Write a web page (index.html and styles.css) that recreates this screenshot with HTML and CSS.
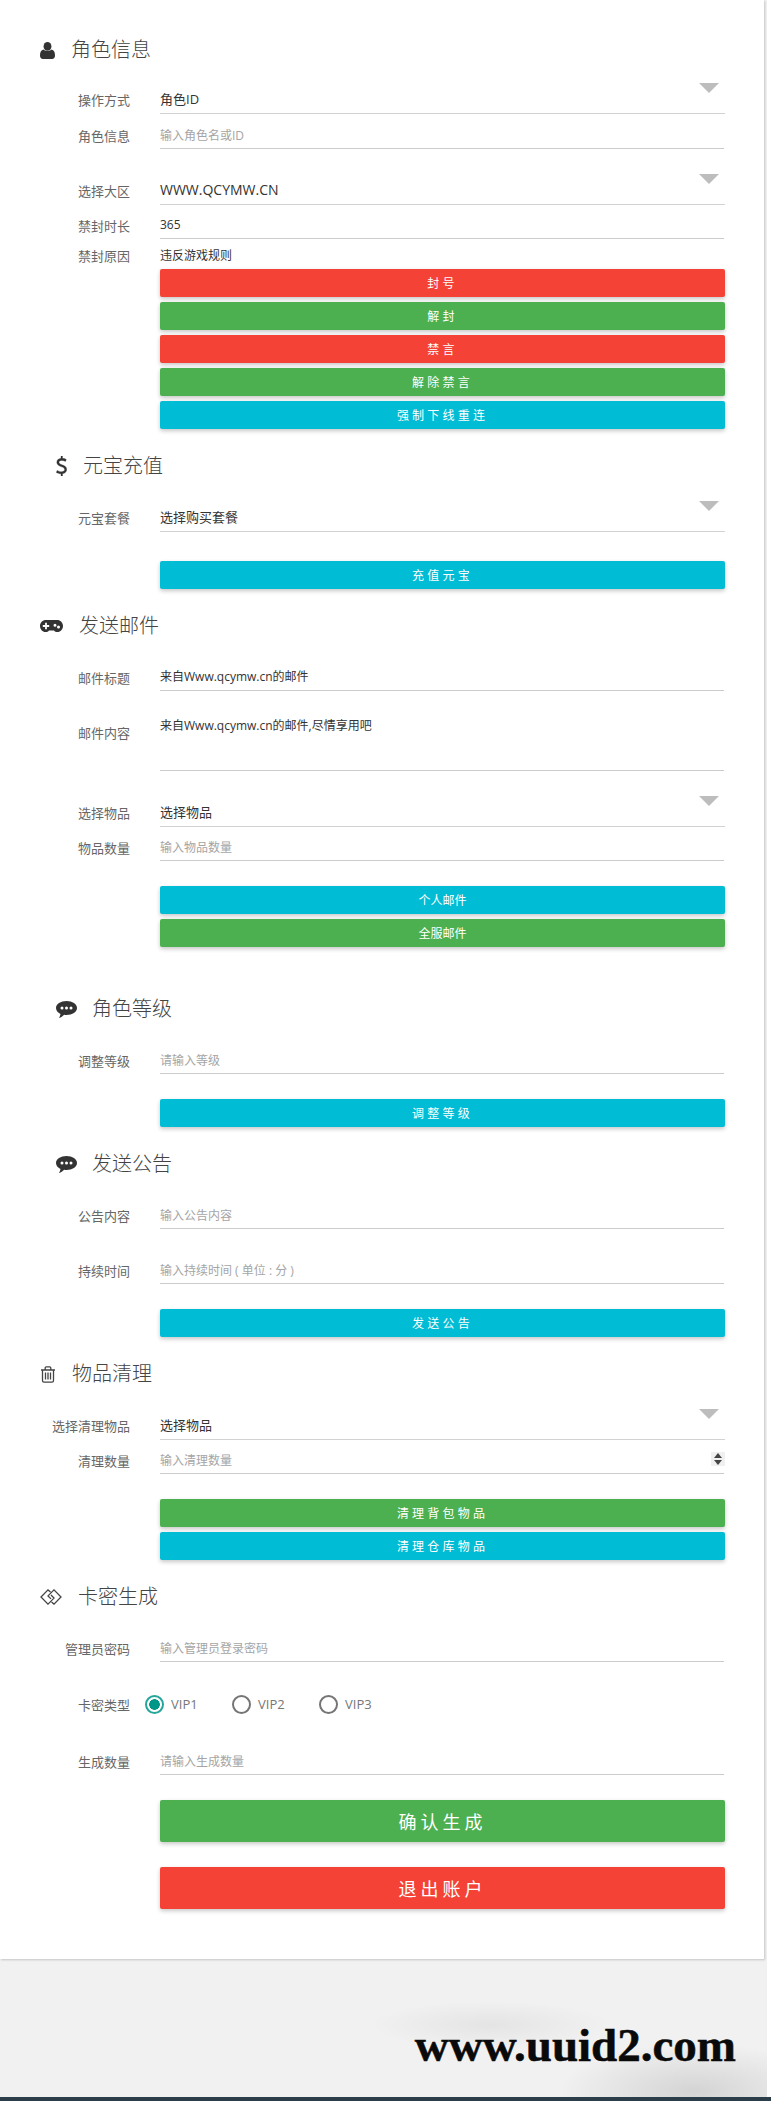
FILE: index.html
```html
<!DOCTYPE html>
<html lang="zh-CN">
<head>
<meta charset="utf-8">
<title>GM</title>
<link rel="stylesheet" href="styles.css">
</head>
<body>
<div class="page">
<main class="card">

<h2 class="title indent-a gap-first">
  <svg class="ico ico-user" viewBox="0 0 16 18"><ellipse cx="8" cy="4.6" rx="4.2" ry="4.6"/><path d="M0 14.6c0-3.8 1-6 3.8-6.6 1 1 2.500 1.600 4.200 1.600s3.200-.6 4.200-1.600c2.800.6 3.800 2.800 3.800 6.600 0 2.100-1.300 3.400-3 3.400H3c-1.700 0-3-1.300-3-3.400z"/></svg>
  <span>角色信息</span>
</h2>
<div class="row sel gap-19"><label class="lab">操作方式</label><div class="ctl"><span class="val">角色ID</span><i class="arrow"></i></div></div>
<div class="row inp gap-8"><label class="lab">角色信息</label><div class="ctl"><span class="ph">输入角色名或ID</span></div></div>
<div class="row sel gap-26"><label class="lab">选择大区</label><div class="ctl"><span class="val wide">WWW.QCYMW.CN</span><i class="arrow"></i></div></div>
<div class="row inp gap-7"><label class="lab">禁封时长</label><div class="ctl"><span class="val small">365</span></div></div>
<div class="row inp bare gap-3"><label class="lab">禁封原因</label><div class="ctl"><span class="val small">违反游戏规则</span></div></div>
<button class="btn red spaced">封号</button>
<button class="btn green spaced gap-5">解封</button>
<button class="btn red spaced gap-5">禁言</button>
<button class="btn green spaced gap-5">解除禁言</button>
<button class="btn cyan spaced gap-5">强制下线重连</button>

<h2 class="title indent-b gap-22">
  <svg class="ico ico-dollar" viewBox="0 0 11 20"><path d="M5 0h1.500v2.300c1.500.1 2.700.5 3.800 1.100l-.8 2c-1.200-.6-2.500-1-3.800-1-1.700 0-2.700.7-2.700 1.900 0 1.100.8 1.700 3 2.500 3 1.100 4.700 2.300 4.700 4.700 0 2.200-1.600 3.800-4.200 4.200V20H5v-2.200c-1.800-.1-3.500-.6-4.700-1.300l.8-2.100c1.300.7 2.900 1.300 4.500 1.300 1.900 0 3-.9 3-2.200 0-1.200-.9-1.900-3-2.700C2.600 9.700.8 8.600.8 6.200c0-2.100 1.600-3.600 4.200-3.900z"/></svg>
  <span>元宝充值</span>
</h2>
<div class="row sel gap-21"><label class="lab">元宝套餐</label><div class="ctl"><span class="val">选择购买套餐</span><i class="arrow"></i></div></div>
<button class="btn cyan spaced gap-29">充值元宝</button>

<h2 class="title indent-a gap-22">
  <svg class="ico ico-pad" viewBox="0 0 23 12"><path fill-rule="evenodd" d="M6 0h11c3.500 0 6 2.700 6 6s-2.500 6-5.500 6c-1.700 0-2.700-.6-3.500-1.600H9C8.200 11.400 7.200 12 5.500 12 2.500 12 0 9.300 0 6s2.500-6 6-6zM5.100 2.800v2.300H2.800v1.800h2.300v2.300h1.800V6.900h2.300V5.100H6.900V2.800zm9.900 .9a1.500 1.500 0 1 0 0 3 1.500 1.500 0 0 0 0-3zm3.500 1.700a1.500 1.500 0 1 0 0 3 1.500 1.500 0 0 0 0-3z"/></svg>
  <span>发送邮件</span>
</h2>
<div class="row inp gap-23"><label class="lab">邮件标题</label><div class="ctl"><span class="val small">来自Www.qcymw.cn的邮件</span></div></div>
<div class="row area gap-24"><label class="lab">邮件内容</label><div class="ctl"><span class="val small">来自Www.qcymw.cn的邮件,尽情享用吧</span></div></div>
<div class="row sel gap-26"><label class="lab">选择物品</label><div class="ctl"><span class="val">选择物品</span><i class="arrow"></i></div></div>
<div class="row inp gap-7"><label class="lab">物品数量</label><div class="ctl"><span class="ph">输入物品数量</span></div></div>
<button class="btn cyan gap-25">个人邮件</button>
<button class="btn green gap-5">全服邮件</button>

<h2 class="title indent-b gap-47 tight">
  <svg class="ico ico-chat" viewBox="0 0 21 17"><path fill-rule="evenodd" d="M10.500 0C16.300 0 21 3 21 7s-4.700 7-10.500 7c-.8 0-1.600-.1-2.400-.2C6.700 15.400 5 16.500 3 17c.8-1.200 1.300-2.500 1.500-4C1.800 11.700 0 9.500 0 7c0-4 4.700-7 10.500-7zM6 5.500a1.500 1.500 0 1 0 0 3 1.500 1.500 0 0 0 0-3zm4.500 0a1.500 1.500 0 1 0 0 3 1.500 1.500 0 0 0 0-3zm4.500 0a1.500 1.500 0 1 0 0 3 1.500 1.500 0 0 0 0-3z"/></svg>
  <span>角色等级</span>
</h2>
<div class="row inp gap-23"><label class="lab">调整等级</label><div class="ctl"><span class="ph">请输入等级</span></div></div>
<button class="btn cyan spaced gap-25">调整等级</button>

<h2 class="title indent-b gap-22 tight">
  <svg class="ico ico-chat" viewBox="0 0 21 17"><path fill-rule="evenodd" d="M10.500 0C16.300 0 21 3 21 7s-4.700 7-10.500 7c-.8 0-1.600-.1-2.400-.2C6.700 15.400 5 16.500 3 17c.8-1.200 1.300-2.500 1.500-4C1.800 11.700 0 9.500 0 7c0-4 4.700-7 10.500-7zM6 5.500a1.500 1.500 0 1 0 0 3 1.500 1.500 0 0 0 0-3zm4.500 0a1.500 1.500 0 1 0 0 3 1.500 1.500 0 0 0 0-3zm4.500 0a1.500 1.500 0 1 0 0 3 1.500 1.500 0 0 0 0-3z"/></svg>
  <span>发送公告</span>
</h2>
<div class="row inp gap-23"><label class="lab">公告内容</label><div class="ctl"><span class="ph">输入公告内容</span></div></div>
<div class="row inp gap-28"><label class="lab">持续时间</label><div class="ctl"><span class="ph">输入持续时间 ( 单位 : 分 )</span></div></div>
<button class="btn cyan spaced gap-25">发送公告</button>

<h2 class="title indent-a gap-22">
  <svg class="ico ico-trash" viewBox="0 0 16 17"><path class="line" d="M1 4h14M2.500 4v10.500c0 1 .6 1.700 1.500 1.700h8c.9 0 1.500-.7 1.500-1.700V4M5.200 4V2c0-.7.4-1.200 1.100-1.200h3.400c.7 0 1.100.5 1.100 1.200v2M5.500 6.500v7M8 6.500v7M10.500 6.500v7"/></svg>
  <span>物品清理</span>
</h2>
<div class="row sel gap-21"><label class="lab">选择清理物品</label><div class="ctl"><span class="val">选择物品</span><i class="arrow"></i></div></div>
<div class="row inp gap-7"><label class="lab">清理数量</label><div class="ctl"><span class="ph">输入清理数量</span><i class="spin"></i></div></div>
<button class="btn green spaced gap-25">清理背包物品</button>
<button class="btn cyan spaced gap-5">清理仓库物品</button>

<h2 class="title indent-a gap-22">
  <svg class="ico ico-key" viewBox="0 0 22 16"><path class="line" d="M10.500 3 8 .9 1 8l7 7.100 6-6L11 6M11.500 13 14 15.100 21 8 14 .9l-6 6 3 3"/></svg>
  <span>卡密生成</span>
</h2>
<div class="row inp gap-23"><label class="lab">管理员密码</label><div class="ctl"><span class="ph">输入管理员登录密码</span></div></div>
<div class="radios gap-30">
  <label class="lab">卡密类型</label>
  <span class="radio on"><i class="dot"></i>VIP1</span>
  <span class="radio"><i class="dot"></i>VIP2</span>
  <span class="radio"><i class="dot"></i>VIP3</span>
</div>
<div class="row inp gap-32"><label class="lab">生成数量</label><div class="ctl"><span class="ph">请输入生成数量</span></div></div>
<button class="btn green big gap-25">确认生成</button>
<button class="btn red big gap-25">退出账户</button>
</main>

<footer class="foot"><span class="mark">www.uuid2.com</span></footer>
</div>
<div class="edge"></div>
</body>
</html>
```

FILE: styles.css
```css
* { box-sizing: border-box; }
html, body { margin: 0; padding: 0; }
body {
  width: 771px;
  height: 2101px;
  overflow: hidden;
  background: #fff;
  font-family: "Open Sans", "Noto Sans CJK SC", sans-serif;
  color: #333;
}
.page { width: 767px; height: 2097px; background: #f1f1f1; display: flex; flex-direction: column; }
.card {
  width: 764px;
  height: 1959px;
  background: #fff;
  box-shadow: 1px 1px 2px rgba(0,0,0,.18);
  padding: 0 39px 0 0;
  display: flex;
  flex-direction: column;
}
.title {
  margin-bottom: 0;
  height: 30px;
  display: flex;
  align-items: center;
  gap: 16px;
  font-size: 20px;
  font-weight: 300;
  line-height: 30px;
  color: #444;
  flex: none;
}
.title.tight { gap: 15px; }
.indent-a { padding-left: 40px; }
.indent-b { padding-left: 56px; }
.ico { flex: none; fill: #333; display: block; }
.ico .line { fill: none; stroke: #444; stroke-width: 1.300; }
.ico-user { width: 15px; height: 17px; }
.ico-dollar { width: 11px; height: 20px; stroke: #333; stroke-width: .3; }
.ico-pad { width: 23px; height: 12px; }
.ico-chat { width: 21px; height: 17px; }
.ico-trash { width: 16px; height: 17px; }
.ico-key { width: 22px; height: 16px; }

.row { display: flex; flex: none; gap: 30px; }
.lab { width: 130px; flex: none; text-align: right; font-size: 13px; color: #666; }
.ctl { position: relative; flex: 1; border-bottom: 1px solid #d2d2d2; display: flex; align-items: center; font-size: 13px; }
.sel { height: 30px; align-items: center; }
.sel .ctl { height: 30px; }
.inp { height: 27px; align-items: center; }
.inp .ctl { height: 27px; margin-right: 1px; border-bottom-color: #ccc; }
.bare .ctl { border-bottom: 0; }
.area { height: 56px; }
.area .ctl { height: 56px; align-items: flex-start; padding-top: 1px; margin-right: 1px; border-bottom-color: #ccc; }
.area .lab { padding-top: 8px; }
.val { font-size: 13px; color: #333; line-height: 20px; }
.val.small { font-size: 12px; }
.val.wide { font-size: 14px; }
.ph { font-size: 12px; color: #a5a5a5; }
.arrow {
  position: absolute;
  right: 6px;
  top: -1px;
  width: 0;
  height: 0;
  border-left: 10px solid transparent;
  border-right: 10px solid transparent;
  border-top: 10px solid #bdbdbd;
}
.spin {
  position: absolute;
  right: -1px;
  top: 5px;
  width: 14px;
  height: 14px;
  background:
    linear-gradient(#f0f0f0, #f0f0f0);
}
.spin::before, .spin::after {
  content: "";
  position: absolute;
  left: 3px;
  width: 0;
  height: 0;
  border-left: 4px solid transparent;
  border-right: 4px solid transparent;
}
.spin::before { top: 1px; border-bottom: 5px solid #444; }
.spin::after { bottom: 1px; border-top: 5px solid #444; }

.btn {
  display: block;
  flex: none;
  width: 565px;
  height: 28px;
  margin-left: 160px;
  border: 0;
  border-radius: 2px;
  padding: 0;
  color: #fff;
  font-family: inherit;
  font-size: 12px;
  box-shadow: 0 2px 4px rgba(0,0,0,.22);
}
.btn.spaced { letter-spacing: 3.200px; }
.btn.big { height: 42px; font-size: 18px; letter-spacing: 4px; }
.red { background: #f44336; }
.green { background: #4caf50; }
.cyan { background: #00bcd4; }

.radios { display: flex; align-items: center; height: 24px; flex: none; }
.radios .lab { margin-right: 15px; }
.radio { display: flex; align-items: center; gap: 7px; width: 87px; font-size: 13px; color: #777; }
.dot { width: 19px; height: 19px; flex: none; border: 2px solid #757575; border-radius: 50%; display: block; }
.radio.on .dot { border-color: #26a69a; background: radial-gradient(circle, #009688 0 5px, #fff 5.600px); }

.foot {
  flex: 1;
  display: flex;
  justify-content: flex-end;
  padding: 56px 31px 0 0;
  background:
    radial-gradient(ellipse 135px 48px at 695px 132px, #d4d4d4, rgba(212,212,212,0)),
    radial-gradient(ellipse 120px 24px at 490px 66px, #e4e4e4, rgba(228,228,228,0));
}
.mark {
  font-family: "Liberation Serif", serif;
  font-weight: 700;
  font-size: 47px;
  line-height: 60px;
  height: 60px;
  color: #0a0a0a;
  -webkit-text-stroke: .5px #0a0a0a;
}
.edge { height: 4px; width: 771px; background: #2b3e4a; }

.gap-first { margin-top: 35px; }
.gap-3 { margin-top: 3px; }
.gap-5 { margin-top: 5px; }
.gap-7 { margin-top: 7px; }
.gap-8 { margin-top: 8px; }
.gap-19 { margin-top: 19px; }
.gap-21 { margin-top: 21px; }
.gap-22 { margin-top: 22px; }
.gap-23 { margin-top: 23px; }
.gap-24 { margin-top: 24px; }
.gap-25 { margin-top: 25px; }
.gap-26 { margin-top: 26px; }
.gap-28 { margin-top: 28px; }
.gap-29 { margin-top: 29px; }
.gap-30 { margin-top: 30px; }
.gap-32 { margin-top: 32px; }
.gap-47 { margin-top: 47px; }
```
